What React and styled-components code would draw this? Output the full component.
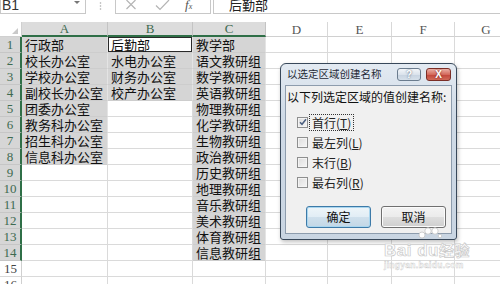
import React from 'react';
import styled, { createGlobalStyle, css } from 'styled-components';

const Global = createGlobalStyle`
  html, body { margin: 0; padding: 0; background: #fff; }
  body {
    width: 500px; height: 284px; overflow: hidden;
    font-family: "Noto Sans CJK SC", "Noto Sans", sans-serif;
  }
`;

const CJK = `"Noto Sans CJK SC", "Noto Sans", sans-serif`;
const GREEN = '#2f6f47';

const Page = styled.div`
  position: relative;
  width: 500px;
  height: 284px;
  overflow: hidden;
  display: flex;
  flex-direction: column;
  background: #fff;
`;

/* ---------- formula bar ---------- */
const FormulaBar = styled.div`
  flex: none;
  height: 14px;
  display: flex;
  align-items: stretch;
`;

const NameBox = styled.div`
  position: relative;
  box-sizing: border-box;
  width: 86px;
  border: 1px solid #c8c8c8;
  border-top: none;
  padding-left: 1px;
  font: 14px/14px "Liberation Sans", Arial, sans-serif;
  color: #333;
  span { display: block; margin-top: -2px; }
`;

const DropArrow = styled.i`
  position: absolute;
  right: 5px;
  top: 1px;
  width: 0;
  height: 0;
  border-left: 3px solid transparent;
  border-right: 3px solid transparent;
  border-top: 3px solid #777;
`;

const Grip = styled.div`
  width: 29px;
  display: flex;
  justify-content: center;
  padding-top: 2px;
  box-sizing: border-box;
  svg { display: block; }
`;

const ButtonsBox = styled.div`
  box-sizing: border-box;
  width: 96px;
  border: 1px solid #c8c8c8;
  border-top: none;
  display: flex;
  align-items: flex-start;
  padding-left: 9px;
  gap: 18px;
`;

const Fx = styled.span`
  font: italic 13px/10px "Liberation Serif", serif;
  color: #555;
  margin-left: -3px;
  sub { font-size: 8px; vertical-align: 0; }
`;

const FormulaInput = styled.div`
  box-sizing: border-box;
  flex: 1;
  margin-left: 2px;
  border: 1px solid #c8c8c8;
  border-top: none;
  border-right: none;
  padding-left: 15px;
  font-family: ${CJK};
  font-size: 13px;
  line-height: 13px;
  color: #222;
  span { display: block; margin-top: -2px; }
`;

const Spacer = styled.div`
  flex: none;
  height: 8px;
`;

/* ---------- sheet ---------- */
const Sheet = styled.div`
  flex: none;
  display: grid;
  grid-template-columns: 22px 86px 85px 73px 62px 64px 63px 63px;
  grid-template-rows: 15px;
  grid-auto-rows: 16px;
  width: 518px;
`;

const Corner = styled.div`
  position: relative;
  box-sizing: border-box;
  border-right: 1px solid #d0d0d0;
  border-bottom: 1px solid #d0d0d0;
  &::after {
    content: '';
    position: absolute;
    right: 3px;
    bottom: 2px;
    width: 0;
    height: 0;
    border-left: 6px solid transparent;
    border-bottom: 6px solid #c9c9c9;
  }
`;

const ColHead = styled.div`
  box-sizing: border-box;
  display: flex;
  align-items: center;
  justify-content: center;
  font: 13px/13px "Liberation Serif", serif;
  color: ${p => (p.$sel ? '#3e6a50' : '#555')};
  background: ${p => (p.$sel ? '#dcdcdc' : '#fff')};
  border-right: 1px solid ${p => (p.$sel ? '#c4c4c4' : '#d8d8d8')};
  border-bottom: ${p => (p.$sel ? `2px solid ${GREEN}` : '1px solid #d0d0d0')};
`;

const RowHead = styled.div`
  box-sizing: border-box;
  display: flex;
  align-items: center;
  justify-content: center;
  font: 13px/13px "Liberation Serif", serif;
  color: ${p => (p.$sel ? '#3e6a50' : '#444')};
  background: ${p => (p.$sel ? '#d6d6d6' : '#fff')};
  border-right: ${p => (p.$sel ? `2px solid ${GREEN}` : '1px solid #d0d0d0')};
  border-bottom: 1px solid ${p => (p.$sel ? '#c6c6c6' : '#d8d8d8')};
`;

const Cell = styled.div`
  box-sizing: border-box;
  padding-left: 3px;
  font-family: ${CJK};
  font-size: 13px;
  line-height: 15px;
  color: #111;
  white-space: nowrap;
  background: ${p => (p.$sel ? '#d5d5d5' : '#fff')};
  border-right: 1px solid ${p => (p.$sel ? '#e4e4e4' : '#dadada')};
  border-bottom: 1px solid ${p => (p.$sel ? '#cdcdcd' : '#dadada')};
  ${p =>
    p.$active &&
    css`
      background: #fff;
      box-shadow: inset 0 0 0 1px #2a2a2a;
    `}
`;

/* ---------- dialog ---------- */
const Dialog = styled.div`
  position: absolute;
  left: 280px;
  top: 63px;
  width: 177px;
  height: 177px;
  box-sizing: border-box;
  border: 1px solid #38485a;
  border-radius: 6px 6px 3px 3px;
  background: linear-gradient(#e3eaf2, #cfdae6 30%, #c9d5e2);
  padding: 0 4px 5px 4px;
  display: flex;
  flex-direction: column;
  box-shadow: 1px 2px 4px rgba(0, 0, 0, 0.25);
`;

const TitleBar = styled.div`
  flex: none;
  height: 21px;
  display: flex;
  align-items: flex-start;
`;

const Title = styled.div`
  flex: 1;
  padding: 3px 0 0 2px;
  font-size: 10.5px;
  line-height: 14px;
  color: #1f2a36;
  white-space: nowrap;
`;

const CaptionButton = styled.div`
  box-sizing: border-box;
  flex: none;
  margin-top: 4px;
  height: 13px;
  width: ${p => (p.$close ? 25 : 24)}px;
  margin-left: ${p => (p.$close ? 5 : 0)}px;
  margin-right: ${p => (p.$close ? 1 : 0)}px;
  border-radius: 3px;
  border: 1px solid ${p => (p.$close ? '#7b2e26' : '#6b7c8e')};
  background: ${p =>
    p.$close
      ? 'linear-gradient(#eab0a6, #d46a5c 50%, #c1453a 51%, #d06a58)'
      : 'linear-gradient(#f3f6f9, #dbe3ec 50%, #c7d3e0 51%, #d6e0ea)'};
  display: flex;
  align-items: center;
  justify-content: center;
  font: bold 10px/10px "Liberation Sans", Arial, sans-serif;
  color: #fff;
  text-shadow: 0 0 2px ${p => (p.$close ? '#6a1a12' : '#45576b')};
`;

const Client = styled.div`
  flex: 1;
  background: #f0f0f0;
  border: 1px solid #8d9cad;
  padding: 3px 3px 0 1px;
  display: flex;
  flex-direction: column;
`;

const Desc = styled.div`
  font-size: 12px;
  line-height: 16px;
  color: #111;
  white-space: nowrap;
`;

const Options = styled.div`
  margin: 7px 0 0 10px;
  display: flex;
  flex-direction: column;
`;

const OptionRow = styled.div`
  height: 20px;
  display: flex;
  align-items: center;
`;

const Box = styled.span`
  box-sizing: border-box;
  width: 11px;
  height: 11px;
  border: 1px solid #8e8f8f;
  background: linear-gradient(135deg, #dcdcdc, #f6f6f6);
  box-shadow: inset 0 0 0 1px #f4f4f4;
  display: flex;
  align-items: center;
  justify-content: center;
  margin-right: 1px;
  svg { display: block; }
`;

const Label = styled.span`
  box-sizing: border-box;
  padding: 0 2px;
  border: 1px ${p => (p.$focus ? 'dotted #333' : 'solid transparent')};
  font-size: 12px;
  line-height: 15px;
  color: #222;
  u { text-underline-offset: 1px; }
`;

const ButtonRow = styled.div`
  margin-top: 14px;
  display: flex;
  justify-content: flex-end;
  gap: 10px;
  padding-right: 2px;
`;

const PushButton = styled.div`
  box-sizing: border-box;
  width: 65px;
  height: 22px;
  border-radius: 3px;
  border: 1px solid ${p => (p.$default ? '#3d7aa8' : '#707070')};
  background: ${p =>
    p.$default
      ? 'linear-gradient(#eef5f9, #e1edf5 50%, #cfe0ec 51%, #c3d7e6)'
      : 'linear-gradient(#f3f3f3, #ebebeb 50%, #dddddd 51%, #cfcfcf)'};
  box-shadow: inset 0 0 0 1px ${p => (p.$default ? '#a9d6ef' : '#fbfbfb')};
  display: flex;
  align-items: center;
  justify-content: center;
  font-size: 12px;
  line-height: 14px;
  color: #111;
`;

/* ---------- watermark ---------- */
const Watermark = styled.div`
  position: absolute;
  left: 384px;
  top: 226px;
  width: 92px;
  display: flex;
  flex-direction: column;
  align-items: flex-start;
  pointer-events: none;
`;

const Paw = styled.svg`
  display: block;
  margin-left: 32px;
`;

const WmBig = styled.div`
  margin-top: -1px;
  font: bold 17px/17px "Liberation Sans", Arial, sans-serif;
  color: #fff;
  -webkit-text-stroke: 0.7px #c9c9c9;
  white-space: nowrap;
  letter-spacing: 0.5px;
  span { font-family: ${CJK}; font-size: 15px; }
`;

const WmSmall = styled.div`
  margin-top: 2px;
  font: bold 8.5px/9px "Liberation Sans", Arial, sans-serif;
  color: #fff;
  -webkit-text-stroke: 0.4px #c9c9c9;
  letter-spacing: 0.3px;
`;

const colA = ['行政部', '校长办公室', '学校办公室', '副校长办公室', '团委办公室', '教务科办公室', '招生科办公室', '信息科办公室'];
const colB = ['后勤部', '水电办公室', '财务办公室', '校产办公室'];
const colC = ['教学部', '语文教研组', '数学教研组', '英语教研组', '物理教研组', '化学教研组', '生物教研组', '政治教研组', '历史教研组', '地理教研组', '音乐教研组', '美术教研组', '体育教研组', '信息教研组'];

const COLS = ['A', 'B', 'C', 'D', 'E', 'F', 'G'];
const DATA = { A: colA, B: colB, C: colC };
const ROW_COUNT = 16;

const options = [
  { text: '首行', key: 'T', checked: true, focus: true },
  { text: '最左列', key: 'L' },
  { text: '末行', key: 'B' },
  { text: '最右列', key: 'R' },
];

function Check() {
  return (
    <svg width="8" height="8" viewBox="0 0 8 8">
      <path d="M1 4.2 L3 6.3 L7 1.2" fill="none" stroke="#4b5f80" strokeWidth="1.5" />
    </svg>
  );
}

export default function App() {
  const rows = [];
  for (let r = 1; r <= ROW_COUNT; r++) {
    rows.push(
      <RowHead key={`h${r}`} $sel={r <= 14}>
        {r}
      </RowHead>
    );
    COLS.forEach(c => {
      const list = DATA[c] || [];
      const val = list[r - 1];
      const sel = r <= list.length;
      rows.push(
        <Cell key={`${c}${r}`} $sel={sel} $active={c === 'B' && r === 1}>
          {val}
        </Cell>
      );
    });
  }

  return (
    <Page>
      <Global />
      <FormulaBar>
        <NameBox>
          <span>B1</span>
          <DropArrow />
        </NameBox>
        <Grip>
          <svg width="3" height="8" viewBox="0 0 3 8">
            <circle cx="1.5" cy="1" r="0.8" fill="#aaa" />
            <circle cx="1.5" cy="4" r="0.8" fill="#aaa" />
            <circle cx="1.5" cy="7" r="0.8" fill="#aaa" />
          </svg>
        </Grip>
        <ButtonsBox>
          <svg width="12" height="10" viewBox="0 0 12 10">
            <path d="M1.5 0 L10.5 9 M10.5 0 L1.5 9" stroke="#b4b4b4" strokeWidth="1.2" />
          </svg>
          <svg width="15" height="11" viewBox="0 0 15 11">
            <path d="M1 5.5 L5 9.5 L14 0" fill="none" stroke="#b4b4b4" strokeWidth="1.2" />
          </svg>
          <Fx>
            f<sub>x</sub>
          </Fx>
        </ButtonsBox>
        <FormulaInput>
          <span>后勤部</span>
        </FormulaInput>
      </FormulaBar>
      <Spacer />
      <Sheet>
        <Corner />
        {COLS.map(c => (
          <ColHead key={c} $sel={!!DATA[c]}>
            {c}
          </ColHead>
        ))}
        {rows}
      </Sheet>

      <Dialog>
        <TitleBar>
          <Title>以选定区域创建名称</Title>
          <CaptionButton>?</CaptionButton>
          <CaptionButton $close>X</CaptionButton>
        </TitleBar>
        <Client>
          <Desc>以下列选定区域的值创建名称:</Desc>
          <Options>
            {options.map(o => (
              <OptionRow key={o.key}>
                <Box>{o.checked && <Check />}</Box>
                <Label $focus={o.focus}>
                  {o.text}(<u>{o.key}</u>)
                </Label>
              </OptionRow>
            ))}
          </Options>
          <ButtonRow>
            <PushButton $default>确定</PushButton>
            <PushButton>取消</PushButton>
          </ButtonRow>
        </Client>
      </Dialog>

      <Watermark>
        <Paw width="26" height="16" viewBox="0 0 26 16">
          <g fill="#fff" stroke="#c4c4c4" strokeWidth="0.8">
            <circle cx="6" cy="9" r="3" />
            <circle cx="12" cy="5" r="3.2" />
            <circle cx="19" cy="5" r="3.2" />
            <circle cx="24" cy="10" r="1.8" />
          </g>
        </Paw>
        <WmBig>
          Bai du<span>经验</span>
        </WmBig>
        <WmSmall>jingyan.baidu.com</WmSmall>
      </Watermark>
    </Page>
  );
}
